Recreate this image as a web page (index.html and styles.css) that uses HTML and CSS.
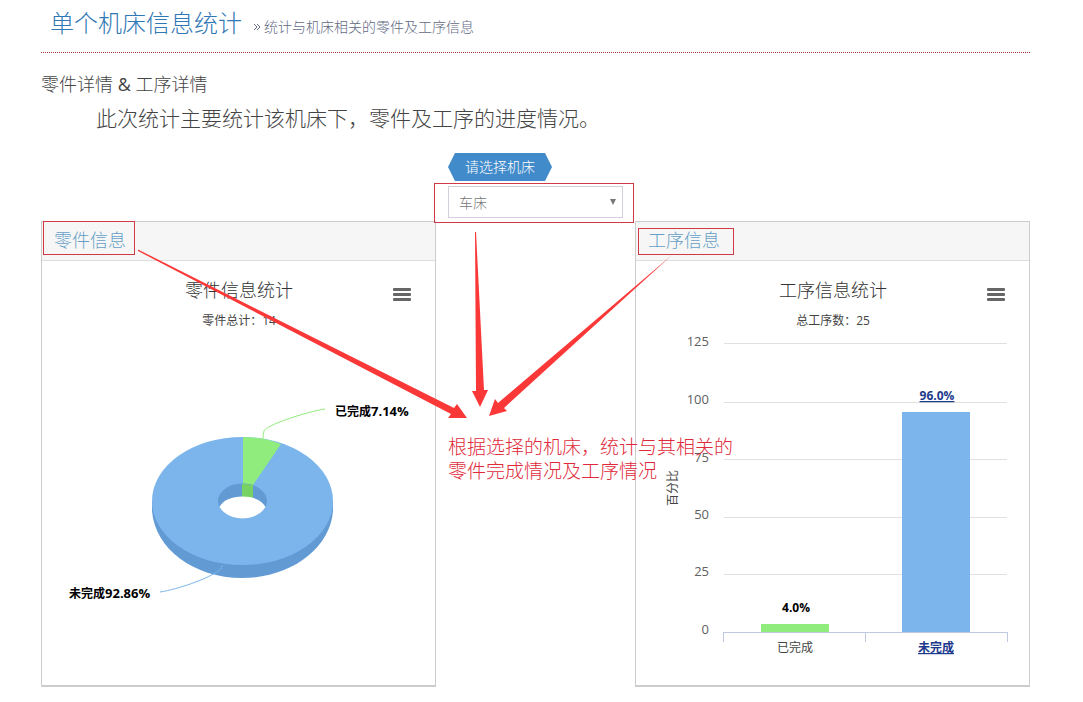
FILE: index.html
```html
<!DOCTYPE html>
<html lang="zh-CN">
<head>
<meta charset="utf-8">
<meta name="viewport" content="width=device-width, initial-scale=1">
<title>单个机床信息统计</title>
<link rel="stylesheet" href="styles.css">
</head>
<body>
<main class="page">
  <header class="page-header">
    <h1 class="page-title">单个机床信息统计</h1>
    <svg class="chevrons" viewBox="0 0 8 8" aria-hidden="true"><path d="M1 1l3 3-3 3M4 1l3 3-3 3"/></svg>
    <small class="page-subtitle">统计与机床相关的零件及工序信息</small>
  </header>

  <h2 class="section-title">零件详情 <span class="ampersand">&amp;</span> 工序详情</h2>
  <p class="lead">此次统计主要统计该机床下，零件及工序的进度情况。</p>

  <div class="board">
    <section class="panel">
      <h3 class="panel-title">零件信息</h3>
      <figure class="chart">
        <button class="chart-menu" type="button" aria-label="图表菜单"><span></span><span></span><span></span></button>
        <svg class="chart-svg" viewBox="0 0 393 424" role="img" aria-label="零件信息统计">
          <text class="chart-title" x="197" y="36">零件信息统计</text>
          <text class="chart-note" x="197" y="64">零件总计：14</text>
          <path fill="#629bd4" d="M110 240v10C113 288 152 317 200 317S288 288 291 250V240z"/>
          <ellipse cx="200.500" cy="240" rx="90.500" ry="64" fill="#7cb5ec"/>
          <path fill="#90ed7d" d="M201 176q20 0 38 7L211 224l-10-1z"/>
          <ellipse cx="200.500" cy="240" rx="24.500" ry="17.500" fill="#629bd4"/>
          <path fill="#76d363" d="M200 223q6 0 11 1v14h-11z"/>
          <path fill="#fff" d="M177.500 246C181 239 190 235.500 200.500 235.500S220 239 223.500 246C219 253.500 210 257.500 200.500 257.500S182 253.500 177.500 246z"/>
          <path class="leader" stroke="#90ed7d" d="M283 148C264 151 224 164 222 170Q221 173 221 178"/>
          <path class="leader" stroke="#7cb5ec" d="M118 331C137 328 164 318 173 312Q180 309 180 304"/>
          <text class="data-label" x="293" y="155">已完成<tspan class="share">7.14%</tspan></text>
          <text class="data-label" x="27" y="337">未完成<tspan class="share">92.86%</tspan></text>
        </svg>
      </figure>
    </section>

    <div class="picker">
      <label class="picker-label" for="machine">请选择机床</label>
      <div class="picker-field">
        <select id="machine" class="picker-select"><option>车床</option></select>
        <svg class="picker-caret" viewBox="0 0 6 6" aria-hidden="true"><path d="M0 0h6L3 6z"/></svg>
      </div>
      <p class="remark">根据选择的机床，统计与其相关的<br>零件完成情况及工序情况</p>
    </div>

    <section class="panel">
      <h3 class="panel-title">工序信息</h3>
      <figure class="chart">
        <button class="chart-menu" type="button" aria-label="图表菜单"><span></span><span></span><span></span></button>
        <svg class="chart-svg" viewBox="0 0 393 424" role="img" aria-label="工序信息统计">
          <text class="chart-title" x="197" y="36">工序信息统计</text>
          <text class="chart-note" x="197" y="64">总工序数：25</text>
          <g fill="#e0e0e0">
            <rect x="88" y="82" width="283" height="1"/>
            <rect x="88" y="141" width="283" height="1"/>
            <rect x="88" y="198" width="283" height="1"/>
            <rect x="88" y="256" width="283" height="1"/>
            <rect x="88" y="313" width="283" height="1"/>
          </g>
          <g class="axis-number">
            <text x="73" y="85">125</text>
            <text x="73" y="143">100</text>
            <text x="73" y="201">75</text>
            <text x="73" y="258">50</text>
            <text x="73" y="315">25</text>
            <text x="73" y="373">0</text>
          </g>
          <text class="axis-title" transform="translate(41 227) rotate(-90)">百分比</text>
          <rect x="125" y="363" width="68" height="8" fill="#90ed7d"/>
          <rect x="266" y="151" width="68" height="220" fill="#7cb5ec"/>
          <path fill="#c0c8e0" d="M87 371h285v10h-1v-9H230v9h-1v-9H88v9h-1z"/>
          <text class="data-label centered" x="160" y="351">4.0%</text>
          <text class="category" x="159" y="391">已完成</text>
          <a class="drill" href="#unfinished">
            <text class="data-label centered" x="301" y="139">96.0%</text>
            <text class="data-label centered" x="300" y="391">未完成</text>
          </a>
        </svg>
      </figure>
    </section>
  </div>

  <svg class="marks" viewBox="41 0 989 702" preserveAspectRatio="xMidYMin meet" aria-hidden="true">
    <g fill="#cf3a45">
      <path d="M43 221h92v34H43zm1 1v32h90v-32z" fill-rule="evenodd"/>
      <path d="M434 183h200v40H434zm1 1v38h198v-38z" fill-rule="evenodd"/>
      <path d="M638 228h96v27h-96zm1 1v25h94v-25z" fill-rule="evenodd"/>
    </g>
    <g fill="#fb3838">
      <path d="M138 249.500L454 408 457 404 467 418 448 418 451 414 138 251z"/>
      <path d="M475 232L476 232 484 390 488 390 480 407 472 391 476 391z"/>
      <path d="M672 255L504 408 507 411 489 416 495 399 498 403z"/>
    </g>
  </svg>
</main>
</body>
</html>
```
FILE: styles.css
```css
* {
  box-sizing: border-box;
}

body {
  margin: 0;
  background: #fff;
  color: #444;
  font-family: "Open Sans", "Noto Sans CJK SC", sans-serif;
  font-size: 14px;
  font-weight: 300;
}

h1, h2, h3, p, figure {
  margin: 0;
  font-weight: 300;
}

.page {
  position: relative;
  padding: 0 53px 15px 41px;
}

.page-header {
  display: flex;
  align-items: center;
  padding: 5px 9px 11px;
  border-bottom: 1px dotted #a8323a;
}

.page-title {
  color: #2f77b5;
  font-size: 24px;
  line-height: 36px;
}

.chevrons {
  width: 8px;
  height: 8px;
  margin: 8px 3px 0 11px;
  fill: none;
  stroke: #687088;
}

.page-subtitle {
  padding-top: 8px;
  color: #626a83;
  font-size: 14px;
  line-height: 20px;
}

.section-title {
  margin-top: 19px;
  font-size: 18px;
  line-height: 24px;
}

.ampersand {
  font-weight: 400;
}

.lead {
  margin-top: 6px;
  padding-left: 55px;
  font-size: 21px;
  line-height: 32px;
}

.board {
  display: grid;
  grid-template-columns: 1fr 199px 1fr;
  margin-top: 19px;
}

.panel {
  margin-top: 68px;
  border: 1px solid #ccc;
  border-bottom-width: 2px;
}

.panel-title {
  padding: 0 12px 2px;
  background: #f6f6f6;
  border-bottom: 1px solid #ddd;
  color: #669fc7;
  font-size: 18px;
  line-height: 36px;
}

.chart {
  position: relative;
}

.chart-svg {
  display: block;
  width: 393px;
  height: 424px;
  margin: 0 auto;
}

.chart-menu {
  position: absolute;
  top: 23px;
  right: 21px;
  display: flex;
  flex-direction: column;
  justify-content: center;
  gap: 2px;
  width: 24px;
  height: 20px;
  padding: 0 3px;
  border: 0;
  background: none;
}

.chart-menu span {
  height: 3px;
  border-radius: 1px;
  background: #666;
}

.chart-title {
  fill: #333;
  font-size: 18px;
  text-anchor: middle;
}

.chart-note,
.axis-title,
.category {
  fill: #444;
  font-size: 12px;
  font-weight: 400;
  text-anchor: middle;
}

.axis-number {
  fill: #606060;
  font-size: 13px;
  font-weight: 400;
  text-anchor: end;
}

.data-label {
  fill: #000;
  font-size: 12px;
  font-weight: 700;
}

.share {
  font-size: 13px;
}

.centered {
  text-anchor: middle;
}

.drill .data-label {
  fill: #1c3a8c;
  text-decoration: underline;
}

.leader {
  fill: none;
  stroke-width: 1px;
}

.picker {
  position: relative;
  z-index: 1;
  padding: 0 12px;
}

.picker-label {
  display: inline-block;
  padding: 0 17px;
  background: #428bca;
  clip-path: polygon(0 50%, 7px 0, calc(100% - 7px) 0, 100% 50%, calc(100% - 7px) 100%, 7px 100%);
  color: #fff;
  font-size: 14px;
  line-height: 28px;
  vertical-align: top;
}

.picker-field {
  position: relative;
  margin-top: 5px;
}

.picker-select {
  display: block;
  width: 100%;
  height: 32px;
  padding: 0 10px;
  border: 1px solid #d2d0dc;
  border-radius: 0;
  background: #fff;
  appearance: none;
  color: #777;
  font: inherit;
}

.picker-caret {
  position: absolute;
  top: 13px;
  right: 7px;
  width: 6px;
  height: 6px;
  fill: #777;
  pointer-events: none;
}

.remark {
  margin-top: 217px;
  color: #e02a3a;
  font-size: 19px;
  line-height: 24px;
  white-space: nowrap;
}

.marks {
  position: absolute;
  z-index: 2;
  top: 0;
  left: 41px;
  width: calc(100% - 94px);
  pointer-events: none;
}
```
